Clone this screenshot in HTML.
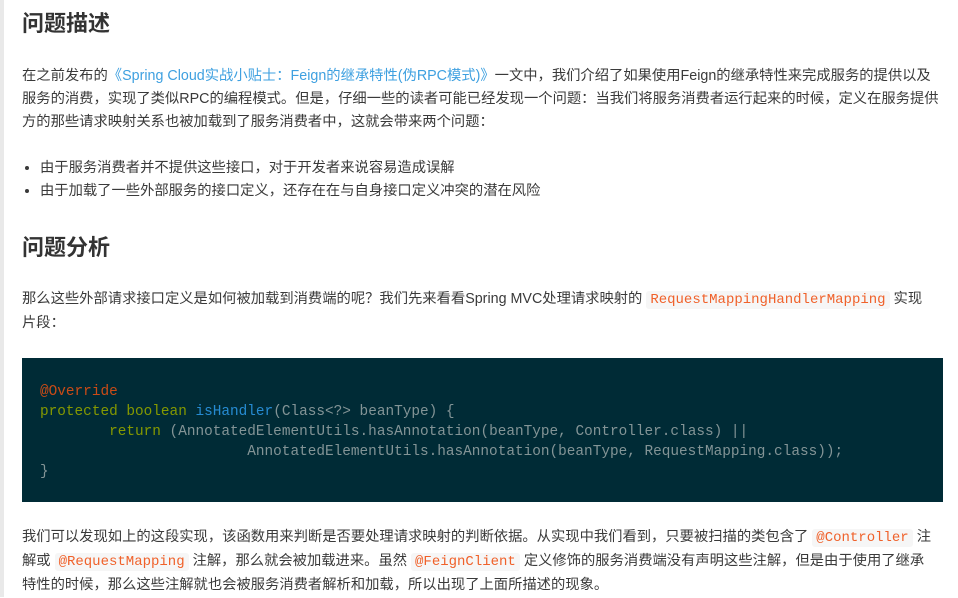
<!DOCTYPE html>
<html><head><meta charset="utf-8"><style>
body{margin:0;width:958px;height:597px;overflow:hidden;background:#fff;font-family:"Liberation Sans","Noto Sans CJK SC",sans-serif;color:#333;}
.lb{position:absolute;left:0;top:0;width:4px;height:597px;background:#e9e9e9}
h2{position:absolute;left:22px;margin:0;font-size:22px;font-weight:bold;color:#333;line-height:30px}
.p{position:absolute;left:22px;width:925px;font-size:14.3px;line-height:23.2px;color:#3a3a3a;white-space:nowrap}
a{color:#3ea0e0;text-decoration:none}
.c{font-family:"Liberation Mono",monospace;color:#f0612a;background:#f6f6f6;padding:1px 4px;border-radius:3px;font-size:14px}
ul{position:absolute;left:22px;top:157px;margin:0;padding:0 0 0 18px;font-size:14.3px;line-height:23px;color:#3a3a3a}
pre{position:absolute;left:22px;top:358px;width:921px;height:144px;margin:0;background:#002b36;box-sizing:border-box;padding:24px 18px;font-family:"Liberation Mono",monospace;font-size:14.4px;line-height:20px;color:#839496}
.a{color:#cb4b16}.k{color:#859900}.f{color:#268bd2}
</style></head><body>
<div class="lb"></div>
<h2 style="top:9px">问题描述</h2>
<div class="p" style="top:65px">在之前发布的<a>《Spring Cloud实战小贴士：Feign的继承特性(伪RPC模式)》</a>一文中，我们介绍了如果使用Feign的继承特性来完成服务的提供以及<br>服务的消费，实现了类似RPC的编程模式。但是，仔细一些的读者可能已经发现一个问题：当我们将服务消费者运行起来的时候，定义在服务提供<br>方的那些请求映射关系也被加载到了服务消费者中，这就会带来两个问题：</div>
<ul><li>由于服务消费者并不提供这些接口，对于开发者来说容易造成误解</li><li>由于加载了一些外部服务的接口定义，还存在在与自身接口定义冲突的潜在风险</li></ul>
<h2 style="top:233px">问题分析</h2>
<div class="p" style="top:288px">那么这些外部请求接口定义是如何被加载到消费端的呢？我们先来看看Spring MVC处理请求映射的 <span class="c">RequestMappingHandlerMapping</span> 实现<br>片段：</div>
<pre><span class="a">@Override</span>
<span class="k">protected</span> <span class="k">boolean</span> <span class="f">isHandler</span>(Class&lt;?&gt; beanType) {
        <span class="k">return</span> (AnnotatedElementUtils.hasAnnotation(beanType, Controller.class) ||
                        AnnotatedElementUtils.hasAnnotation(beanType, RequestMapping.class));
}</pre>
<div class="p" style="top:526px">我们可以发现如上的这段实现，该函数用来判断是否要处理请求映射的判断依据。从实现中我们看到，只要被扫描的类包含了 <span class="c">@Controller</span> 注<br>解或 <span class="c">@RequestMapping</span> 注解，那么就会被加载进来。虽然 <span class="c">@FeignClient</span> 定义修饰的服务消费端没有声明这些注解，但是由于使用了继承<br>特性的时候，那么这些注解就也会被服务消费者解析和加载，所以出现了上面所描述的现象。</div>
</body></html>
